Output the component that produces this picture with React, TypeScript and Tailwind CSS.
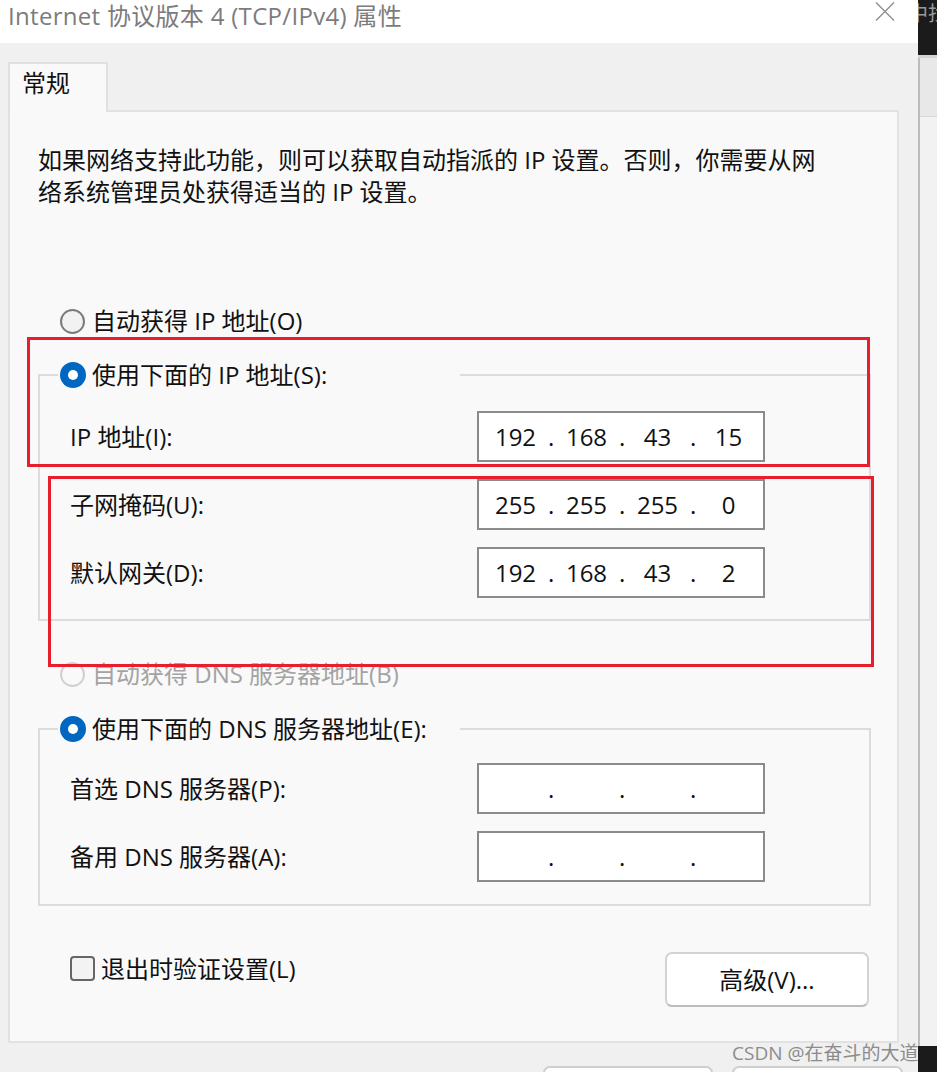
import { Fragment } from "react";

const font = "font-[family-name:'Open_Sans','Noto_Sans_CJK_SC',sans-serif]";

function Radio({ checked = false, disabled = false }: { checked?: boolean; disabled?: boolean }) {
  if (checked) {
    return (
      <span className="w-[26px] h-[26px] shrink-0 rounded-full bg-[#0067c0] flex items-center justify-center">
        <span className="w-[10px] h-[10px] rounded-full bg-white" />
      </span>
    );
  }
  return (
    <span
      className={
        disabled
          ? "w-[25px] h-[25px] shrink-0 rounded-full border-2 border-[#d0d0d0] bg-[#f9f9f9]"
          : "w-[25px] h-[25px] shrink-0 rounded-full border-2 border-[#7b7b7b] bg-[#f2f2f2]"
      }
    />
  );
}

function IpBox({ parts }: { parts: string[] }) {
  return (
    <div className="w-[288px] h-[51px] shrink-0 border-2 border-[#8b8b8b] bg-white flex items-center pl-[4px] pr-[2px] text-[24px] leading-none text-[#111]">
      {parts.map((p, i) => (
        <Fragment key={i}>
          {i > 0 && <span className="w-[6px] text-center">.</span>}
          <span className="flex-1 text-center">{p}</span>
        </Fragment>
      ))}
    </div>
  );
}

function Row({ label, parts }: { label: string; parts: string[] }) {
  return (
    <div className="flex items-center pl-[30px]">
      <span className="w-[407px] leading-[32px]">{label}</span>
      <IpBox parts={parts} />
    </div>
  );
}

function Group({ legend, children, pt, pb }: { legend: string; children: React.ReactNode; pt: string; pb: string }) {
  return (
    <fieldset className={`w-[833px] ml-[28px] border-2 border-[#dcdcdc] ${pt} ${pb}`}>
      <legend className="ml-[18px]">
        <div className="w-[402px] h-[32px] flex items-center gap-[6px] pl-[2px] whitespace-nowrap">
          <Radio checked />
          <span className="leading-[32px]">{legend}</span>
        </div>
      </legend>
      <div className="flex flex-col gap-[17px]">{children}</div>
    </fieldset>
  );
}

export default function App() {
  return (
    <div className={`relative w-[937px] h-[1072px] overflow-hidden flex bg-[#f0f0f0] text-[24px] text-[#111] ${font}`}>
      <div className="w-[918px] h-full flex flex-col">
        {/* title bar */}
        <div className="h-[43px] shrink-0 bg-white flex items-start justify-between pl-[8px] pr-[23px]">
          <span className="text-[24px] leading-[31px] tracking-[0.3px] text-[#7c7c7c] whitespace-nowrap">
            Internet 协议版本 4 (TCP/IPv4) 属性
          </span>
          <svg className="mt-[2px]" width="20" height="19" viewBox="0 0 20 19">
            <path d="M1 0.5 L19 18.5 M19 0.5 L1 18.5" stroke="#8f8f8f" strokeWidth="1.4" fill="none" />
          </svg>
        </div>

        <div className="flex-1 px-[8px] pt-[19px]">
          {/* tab */}
          <div className="relative z-10 w-[100px] h-[50px] -mb-[2px] border-2 border-b-0 border-[#e0e0e0] bg-[#f9f9f9] pl-[12px] pt-[3px] leading-[32px]">
            常规
          </div>

          {/* panel */}
          <div className="w-[891px] h-[933px] border-2 border-[#e2e2e2] bg-[#f9f9f9]">
            <div className="pl-[28px] mt-[32px] leading-[32px] whitespace-nowrap">
              <div>如果网络支持此功能，则可以获取自动指派的 IP 设置。否则，你需要从网</div>
              <div>络系统管理员处获得适当的 IP 设置。</div>
            </div>

            <div className="mt-[97px] h-[32px] pl-[50px] flex items-center gap-[7px]">
              <Radio />
              <span className="leading-[32px]">自动获得 IP 地址(O)</span>
            </div>

            <div className="mt-[22px]">
              <Group legend="使用下面的 IP 地址(S):" pt="pt-[20px]" pb="pb-[21px]">
                <Row label="IP 地址(I):" parts={["192", "168", "43", "15"]} />
                <Row label="子网掩码(U):" parts={["255", "255", "255", "0"]} />
                <Row label="默认网关(D):" parts={["192", "168", "43", "2"]} />
              </Group>
            </div>

            <div className="mt-[37px] h-[32px] pl-[50px] flex items-center gap-[7px] text-[#a3a3a3]">
              <Radio disabled />
              <span className="leading-[32px]">自动获得 DNS 服务器地址(B)</span>
            </div>

            <div className="mt-[23px]">
              <Group legend="使用下面的 DNS 服务器地址(E):" pt="pt-[18px]" pb="pb-[22px]">
                <Row label="首选 DNS 服务器(P):" parts={["", "", "", ""]} />
                <Row label="备用 DNS 服务器(A):" parts={["", "", "", ""]} />
              </Group>
            </div>

            <div className="mt-[46px] flex items-start justify-between pl-[60px] pr-[28px]">
              <div className="mt-[4px] h-[25px] flex items-center gap-[6px]">
                <span className="w-[25px] h-[25px] rounded-[4px] border-2 border-[#666] bg-[#f3f3f3]" />
                <span className="leading-[32px]">退出时验证设置(L)</span>
              </div>
              <button className="w-[204px] h-[55px] rounded-[7px] border-2 border-[#d3d3d3] border-b-[#bcbcbc] bg-white leading-[32px]">
                高级(V)...
              </button>
            </div>
          </div>

          {/* bottom buttons */}
          <div className="mt-[23px] flex justify-end gap-[19px] pr-[7px]">
            <div className="w-[170px] h-[40px] rounded-[7px] border-2 border-[#cfcfcf] bg-white" />
            <div className="w-[171px] h-[40px] rounded-[7px] border-2 border-[#cfcfcf] bg-white" />
          </div>
        </div>
      </div>

      {/* right edge of the window behind */}
      <div className="w-[19px] h-full flex flex-col">
        <div className="h-[55px] bg-[#1b1b1b] overflow-hidden">
          <div className="-ml-[10px] whitespace-nowrap text-[20px] leading-[28px] text-[#9a9a9a]">中找</div>
        </div>
        <div className="h-[3px] bg-[#d4d4d4]" />
        <div className="flex-1 flex flex-col border-l-2 border-[#bcbcbc]">
          <div className="h-[59px] bg-[#e8e8e8] border-b border-[#d8d8d8]" />
          <div className="flex-1 bg-[#f2f2f2]" />
        </div>
        <div className="h-[26px] bg-[#1b1b1b]" />
      </div>

      {/* annotations */}
      <div className="absolute left-[27px] top-[337px] w-[843px] h-[130px] border-[3px] border-[#e81e2c]" />
      <div className="absolute left-[48px] top-[476px] w-[826px] h-[191px] border-[3px] border-[#e81e2c]" />
      <div className="absolute left-[732px] top-[1039px] text-[19px] leading-[28px] text-[#8c8c8c] whitespace-nowrap">
        CSDN @在奋斗的大道
      </div>
    </div>
  );
}
